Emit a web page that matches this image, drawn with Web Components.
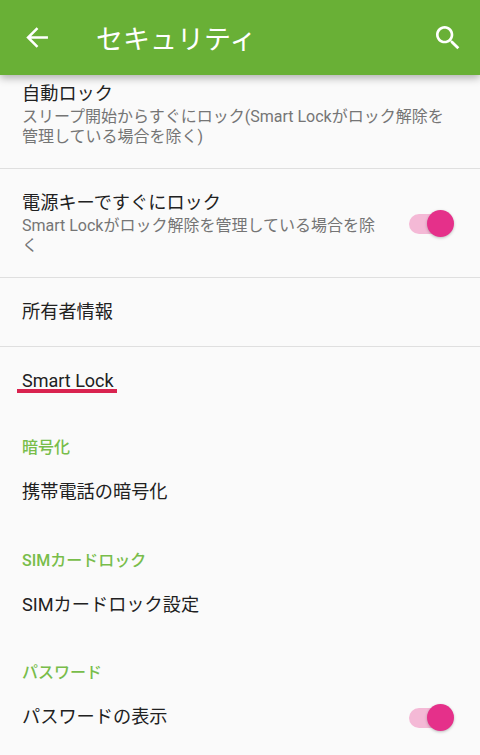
<!DOCTYPE html>
<html lang="ja">
<head>
<meta charset="utf-8">
<title>セキュリティ</title>
<style>
  html, body { margin: 0; height: 100%; overflow: hidden; }
  body {
    background: #fafafa;
    font-family: Roboto, "Noto Sans CJK JP", sans-serif;
  }
</style>
</head>
<body>
<app-bar>セキュリティ</app-bar>
<settings-list>
  <settings-row divider style="--row-h: 94px; --pad-top: 7px; --align: flex-start">
    自動ロック
    <span slot="summary">スリープ開始からすぐにロック(Smart Lockがロック解除を管理している場合を除く)</span>
  </settings-row>
  <settings-row divider toggle style="--row-h: 109px">
    電源キーですぐにロック
    <span slot="summary">Smart Lockがロック解除を管理している場合を除く</span>
  </settings-row>
  <settings-row divider style="--row-h: 69px">所有者情報</settings-row>
  <settings-row marked style="--row-h: 69px">Smart Lock</settings-row>
  <section-head style="--head-h: 42px">暗号化</section-head>
  <settings-row style="--row-h: 68px">携帯電話の暗号化</settings-row>
  <section-head style="--head-h: 45px">SIMカードロック</section-head>
  <settings-row style="--row-h: 68px">SIMカードロック設定</settings-row>
  <section-head style="--head-h: 44px">パスワード</section-head>
  <settings-row toggle style="--row-h: 68px">パスワードの表示</settings-row>
</settings-list>

<script>
class AppBar extends HTMLElement {
  connectedCallback() {
    this.attachShadow({ mode: 'open' });
    this.shadowRoot.innerHTML = `
      <style>
        :host {
          display: flex;
          align-items: center;
          position: relative;
          z-index: 2;
          height: 75px;
          box-sizing: border-box;
          padding: 0 16px 0 21px;
          background: #69b036;
          color: #fff;
          box-shadow: 0 3px 8px rgba(0, 0, 0, 0.3);
        }
        svg { display: block; flex: none; }
        .title {
          flex: 1;
          margin-left: 42px;
          font-size: 27px;
        }
      </style>
      <svg width="33" height="33" viewBox="0 0 24 24" fill="none" stroke="#fff" stroke-width="1.8"><path d="M19.6 12H5.5M12 5.1L5.1 12l6.900 6.900"/></svg>
      <div class="title"><slot></slot></div>
      <svg width="32" height="32" viewBox="0 0 24 24" fill="#fff"><path d="M15.5 14h-.79l-.28-.27C15.41 12.59 16 11.11 16 9.5 16 5.91 13.09 3 9.5 3S3 5.91 3 9.5 5.91 16 9.5 16c1.61 0 3.09-.59 4.23-1.57l.27.28v.79l5 4.99L20.49 19l-4.99-5zm-6 0C7.01 14 5 11.99 5 9.5S7.01 5 9.5 5 14 7.01 14 9.5 11.99 14 9.5 14z"/></svg>
    `;
  }
}

class SettingsList extends HTMLElement {
  connectedCallback() {
    this.attachShadow({ mode: 'open' });
    this.shadowRoot.innerHTML = `
      <style>
        :host { display: flex; flex-direction: column; }
      </style>
      <slot></slot>
    `;
  }
}

class SettingsRow extends HTMLElement {
  connectedCallback() {
    this.attachShadow({ mode: 'open' });
    const toggle = this.hasAttribute('toggle') ? '<pink-switch></pink-switch>' : '';
    const mark = this.hasAttribute('marked') ? '<div class="mark"></div>' : '';
    this.shadowRoot.innerHTML = `
      <style>
        :host {
          display: flex;
          align-items: var(--align, center);
          position: relative;
          box-sizing: border-box;
          height: var(--row-h, 68px);
          padding: var(--pad-top, 0) 26px 0 22px;
          color: #212121;
        }
        :host([divider]) { border-bottom: 1px solid #dfdfdf; }
        :host([toggle]) .text { margin-right: 24px; }
        :host([marked]) .title { font-size: 18px; }
        .text { flex: 1; min-width: 0; }
        .title { font-size: 18.2px; line-height: 24px; }
        .summary {
          font-size: 16px;
          line-height: 20px;
          padding-top: 1px;
          color: #757575;
        }
        .mark {
          position: absolute;
          left: 17px;
          top: 42px;
          width: 100px;
          height: 4px;
          background: #d9234f;
        }
      </style>
      <div class="text">
        <div class="title"><slot></slot></div>
        <div class="summary"><slot name="summary"></slot></div>
      </div>
      ${toggle}
      ${mark}
    `;
  }
}

class SectionHead extends HTMLElement {
  connectedCallback() {
    this.attachShadow({ mode: 'open' });
    this.shadowRoot.innerHTML = `
      <style>
        :host {
          display: flex;
          align-items: flex-end;
          box-sizing: border-box;
          height: var(--head-h, 44px);
          padding: 0 22px;
          color: #78bd4a;
          font-size: 16px;
          font-weight: 500;
          line-height: 20px;
        }
      </style>
      <slot></slot>
    `;
  }
}

class PinkSwitch extends HTMLElement {
  connectedCallback() {
    this.attachShadow({ mode: 'open' });
    this.shadowRoot.innerHTML = `
      <style>
        :host {
          display: block;
          position: relative;
          flex: none;
          width: 45px;
          height: 27px;
        }
        .track {
          position: absolute;
          left: 0;
          top: 4px;
          width: 34px;
          height: 20px;
          border-radius: 10px;
          background: #f4b9d6;
        }
        .knob {
          position: absolute;
          right: 0;
          top: 0;
          width: 27px;
          height: 27px;
          border-radius: 50%;
          background: #e5308a;
          box-shadow: 0 1px 3px rgba(0, 0, 0, 0.25);
        }
      </style>
      <div class="track"></div>
      <div class="knob"></div>
    `;
  }
}

customElements.define('app-bar', AppBar);
customElements.define('settings-list', SettingsList);
customElements.define('settings-row', SettingsRow);
customElements.define('section-head', SectionHead);
customElements.define('pink-switch', PinkSwitch);
</script>
</body>
</html>
